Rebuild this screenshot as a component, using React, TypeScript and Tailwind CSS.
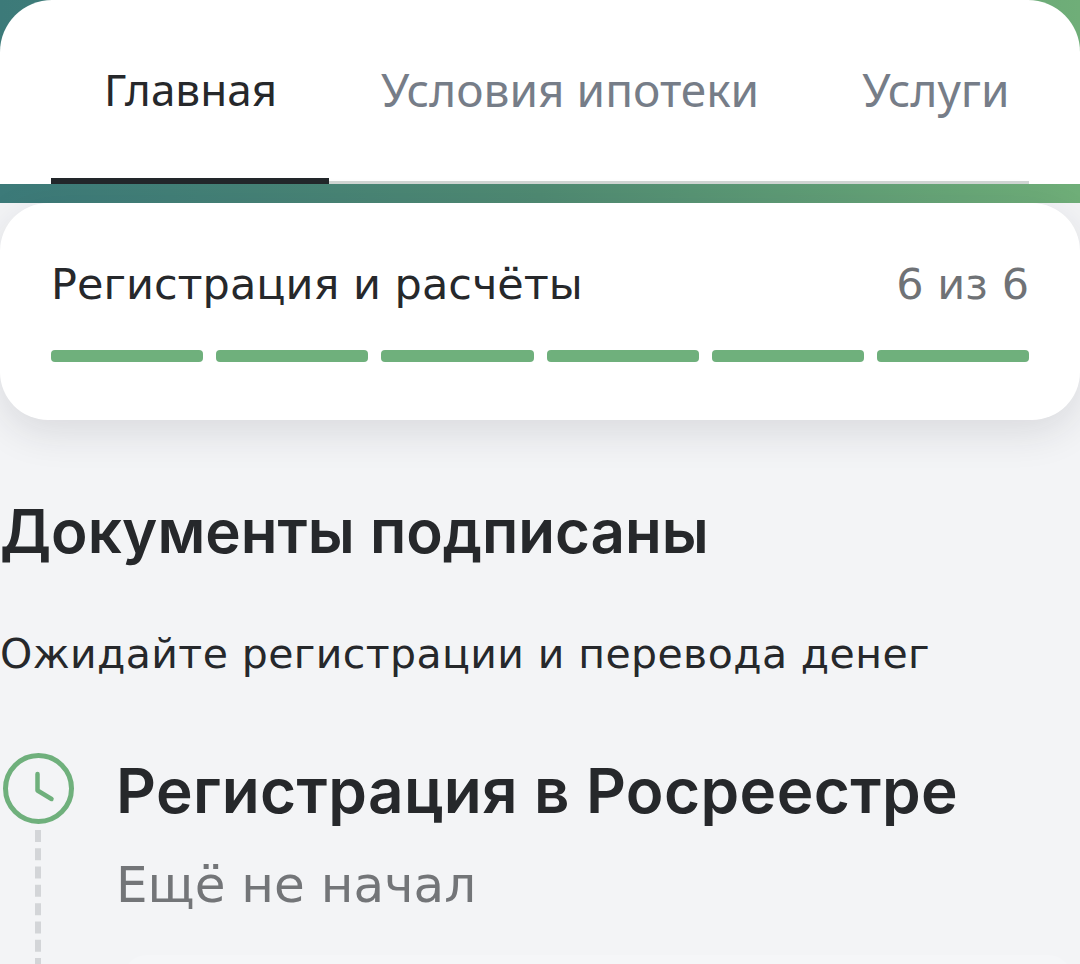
import React from 'react';

const SEGMENTS = [0, 1, 2, 3, 4, 5];

const TabBar: React.FC = () => (
    <div className="bg-gradient-to-r from-[#3c7a79] via-[#4f8a72] to-[#6fae78] pb-[19px]">
        <div className="h-[184px] overflow-hidden rounded-t-[52px] bg-white px-[51px] pt-[61px]">
            <div className="flex h-[123px] border-b-[3px] border-[#d0d5d3] font-['Noto_Sans',sans-serif] leading-[56px]">
                <div className="mb-[-3px] h-[123px] w-[278px] shrink-0 border-b-[6px] border-[#22262a] pl-[53px] text-[44px] text-[#26282b]">
                    Главная
                </div>
                <div className="shrink-0 px-[52px] text-[46px] text-[#767d88]">Условия ипотеки</div>
                <div className="shrink-0 px-[51px] text-[46px] text-[#767d88]">Услуги</div>
            </div>
        </div>
    </div>
);

const ProgressCard: React.FC = () => (
    <section className="h-[217px] rounded-[48px] bg-white px-[51px] pt-[56px] shadow-[0_12px_40px_rgba(30,35,50,0.12)]">
        <div className="flex items-center justify-between font-['DejaVu_Sans',sans-serif] text-[43px] leading-[50px]">
            <span className="text-[#26282b]">Регистрация и расчёты</span>
            <span className="text-[#6f7276]">6 из 6</span>
        </div>
        <div className="mt-[41px] flex gap-[13px]">
            {SEGMENTS.map((segment) => (
                <div key={segment} className="h-[12px] flex-1 rounded-[4px] bg-[#6fb07c]" />
            ))}
        </div>
    </section>
);

const App: React.FC = () => (
    <div className="h-[964px] w-[1080px] overflow-hidden bg-[#f3f4f6]">
        <TabBar />
        <ProgressCard />
        <h1 className="mt-[75px] font-['Inter',sans-serif] text-[60px] font-semibold leading-[72px] text-[#26282b]">
            Документы подписаны
        </h1>
        <p className="mt-[62px] font-['DejaVu_Sans',sans-serif] text-[41px] leading-[50px] tracking-[0.4px] text-[#26282b]">
            Ожидайте регистрации и перевода денег
        </p>
        <div className="mt-[74px] flex pl-[3px]">
            <div className="flex w-[113px] shrink-0 flex-col items-start">
                <svg width="71" height="71" viewBox="0 0 71 71" fill="none" stroke="#6fb07c" strokeLinecap="round">
                    <circle cx="35.5" cy="35.5" r="33" strokeWidth="5" />
                    <path d="M34.5 21V37.5L48.5 46" strokeWidth="4.5" strokeLinejoin="round" />
                </svg>
                <div className="ml-[32px] mt-[6px] h-[140px] border-l-[6px] border-dashed border-[#d3d5d8]" />
            </div>
            <div className="min-w-0 flex-1">
                <h2 className="font-['Inter',sans-serif] text-[62px] font-semibold leading-[76px] tracking-[0.4px] text-[#26282b]">
                    Регистрация в Росреестре
                </h2>
                <p className="mt-[27px] font-['DejaVu_Sans',sans-serif] text-[50px] leading-[58px] text-[#737578]">
                    Ещё не начал
                </p>
                <div className="ml-[7px] mr-[8px] mt-[41px] h-[60px] rounded-[24px] bg-[#f5f6f8]" />
            </div>
        </div>
    </div>
);

export default App;
